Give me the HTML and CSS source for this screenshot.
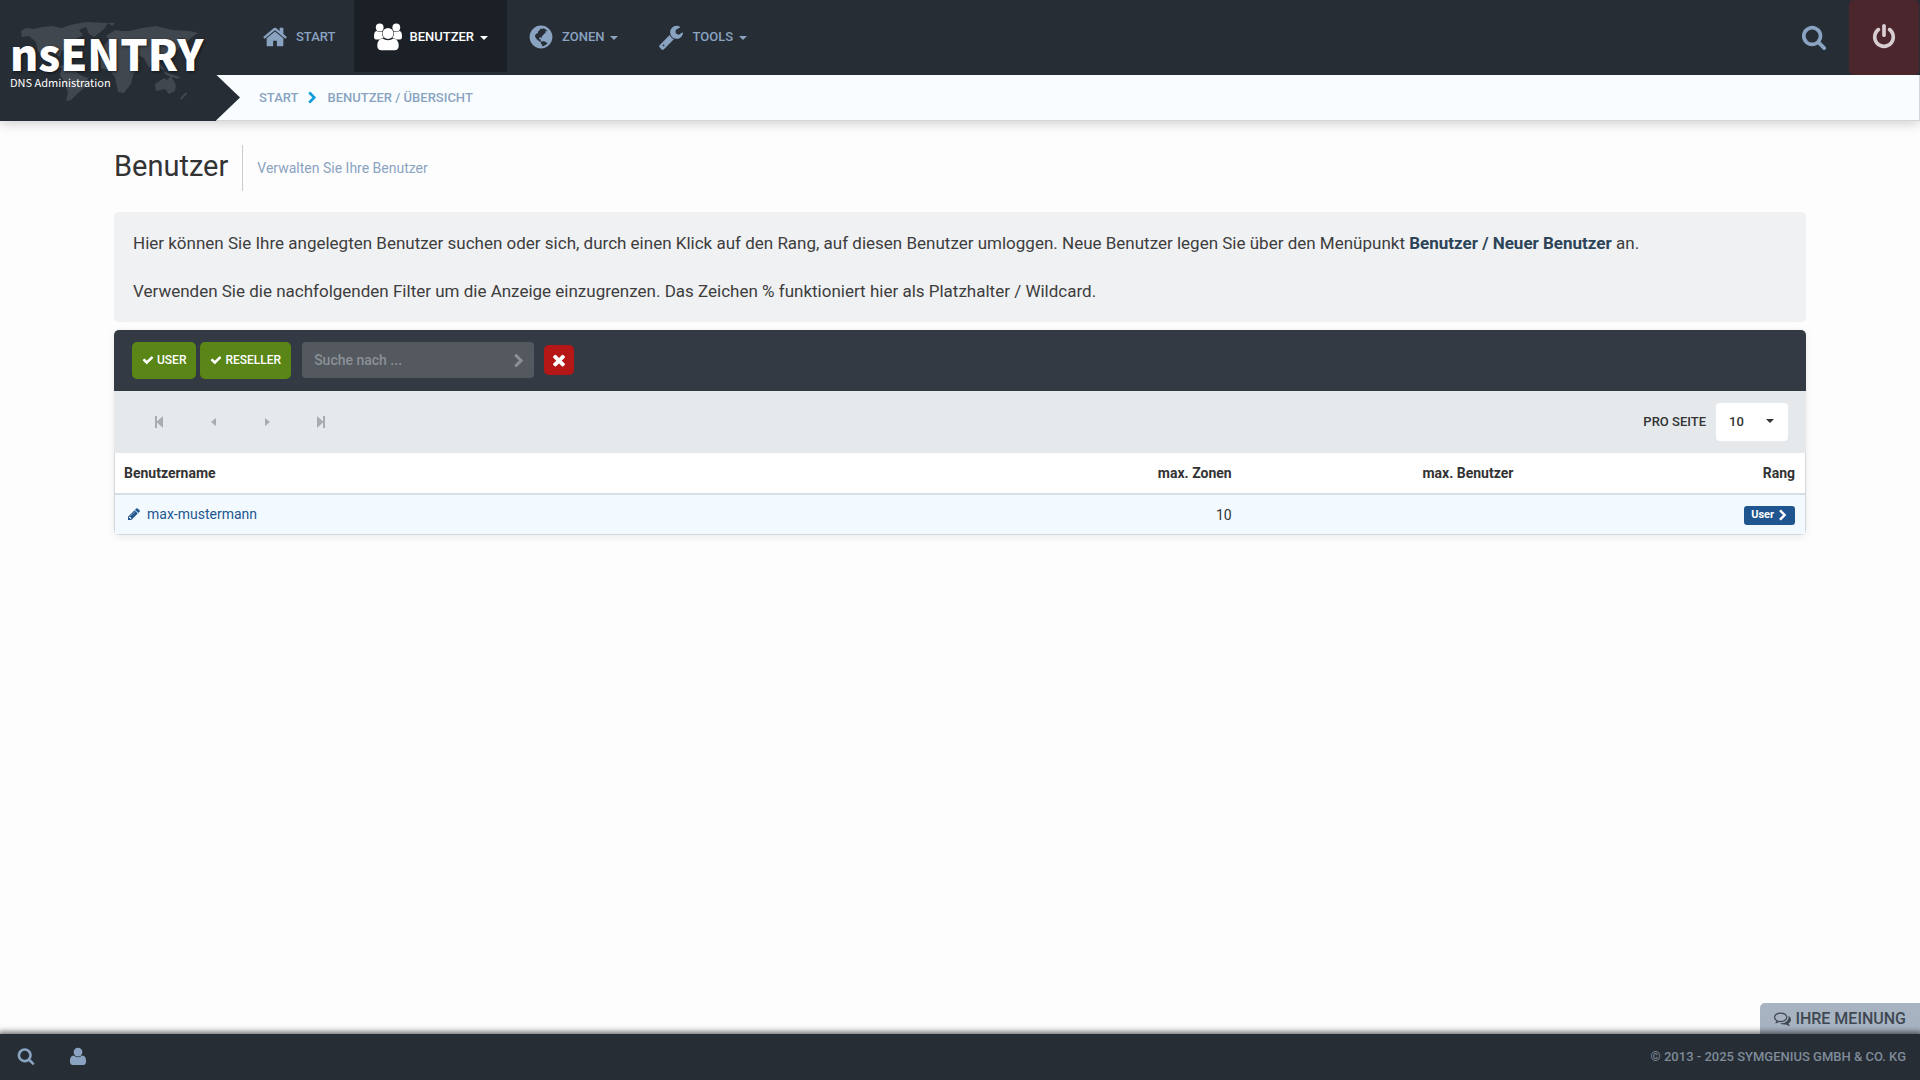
FILE: index.html
```html
<!DOCTYPE html>
<html lang="de">
<head>
<meta charset="utf-8">
<meta name="viewport" content="width=device-width, initial-scale=1">
<title>nsENTRY – Benutzer</title>
<link rel="stylesheet" href="styles.css">
</head>
<body>
<svg class="sprite" aria-hidden="true">
  <symbol id="home" viewBox="0 0 1792 1792"><path d="M1472 992v480q0 26-19 45t-45 19h-384v-384h-256v384h-384q-26 0-45-19t-19-45v-480q0-1 .5-3t.5-3l575-474 575 474q1 2 1 6zm223-69l-62 74q-8 9-21 11h-3q-13 0-21-7l-692-577-692 577q-12 8-24 7-13-2-21-11l-62-74q-8-10-7-23.5t11-21.5l719-599q32-26 76-26t76 26l244 204v-195q0-14 9-23t23-9h192q14 0 23 9t9 23v408l219 182q10 8 11 21.5t-7 23.5z"/></symbol>
  <symbol id="search" viewBox="0 0 1792 1792"><path d="M1216 832q0-185-131.5-316.5t-316.5-131.5-316.5 131.5-131.5 316.5 131.5 316.5 316.5 131.5 316.5-131.5 131.5-316.5zm512 832q0 52-38 90t-90 38q-54 0-90-38l-343-342q-179 124-399 124-143 0-273.5-55.5t-225-150-150-225-55.5-273.5 55.5-273.5 150-225 225-150 273.5-55.5 273.5 55.5 225 150 150 225 55.5 273.5q0 220-124 399l343 343q37 37 37 90z"/></symbol>
  <symbol id="power" viewBox="0 0 1792 1792"><path d="M1664 896q0 156-61 298t-164 245-245 164-298 61-298-61-245-164-164-245-61-298q0-182 80.5-343t226.5-270q43-32 95.5-25t83.5 50q32 42 24.5 94.5t-49.5 84.5q-98 74-151.5 181t-53.5 228q0 104 40.5 198.5t109.5 163.5 163.5 109.5 198.5 40.5 198.5-40.5 163.5-109.5 109.5-163.5 40.5-198.5q0-121-53.5-228t-151.5-181q-42-32-49.5-84.5t24.5-94.5q31-43 84-50t95 25q146 109 226.5 270t80.5 343zm-640-768v640q0 52-38 90t-90 38-90-38-38-90v-640q0-52 38-90t90-38 90 38 38 90z"/></symbol>
  <symbol id="pencil" viewBox="0 0 1792 1792"><path d="M491 1536l91-91-235-235-91 91v107h128v128h107zm523-928q0-22-22-22-10 0-17 7l-542 542q-7 7-7 17 0 22 22 22 10 0 17-7l542-542q7-7 7-17zm-54-192l416 416-832 832h-416v-416zm683 96q0 53-37 90l-166 166-416-416 166-165q36-38 90-38 53 0 91 38l235 234q37 39 37 91z"/></symbol>
  <symbol id="check" viewBox="0 0 1792 1792"><path d="M1671 566q0 40-28 68l-724 724-136 136q-28 28-68 28t-68-28l-136-136-362-362q-28-28-28-68t28-68l136-136q28-28 68-28t68 28l294 295 656-657q28-28 68-28t68 28l136 136q28 28 28 68z"/></symbol>
  <symbol id="times" viewBox="0 0 1792 1792"><path d="M1490 1322q0 40-28 68l-136 136q-28 28-68 28t-68-28l-294-294-294 294q-28 28-68 28t-68-28l-136-136q-28-28-28-68t28-68l294-294-294-294q-28-28-28-68t28-68l136-136q28-28 68-28t68 28l294 294 294-294q28-28 68-28t68 28l136 136q28 28 28 68t-28 68l-294 294 294 294q28 28 28 68z"/></symbol>
  <symbol id="chevron" viewBox="300 0 1200 1792"><path d="M1363 941l-742 742q-19 19-45 19t-45-19l-166-166q-19-19-19-45t19-45l531-531-531-531q-19-19-19-45t19-45l166-166q19-19 45-19t45 19l742 742q19 19 19 45t-19 45z"/></symbol>
  <symbol id="wrench" viewBox="0 0 1792 1792"><path d="M448 1472q0-26-19-45t-45-19-45 19-19 45 19 45 45 19 45-19 19-45zm644-420l-682 682q-37 37-90 37-52 0-91-37l-106-108q-38-36-38-90 0-53 38-91l681-681q39 98 114.5 173.5t173.5 114.5zm634-435q0 39-23 106-47 134-164.5 217.5t-258.5 83.5q-185 0-316.5-131.5t-131.5-316.5 131.5-316.5 316.5-131.5q58 0 121.5 16.5t107.5 46.5q16 11 16 28t-16 28l-293 169v224l193 107q5-3 79-48.5t135.5-81 70.5-35.5q15 0 23.5 10t8.5 25z"/></symbol>
  <symbol id="comments" viewBox="0 0 1792 1792"><path d="M704 384q-153 0-286 52t-211.5 141-78.5 191q0 82 53 158t149 132l97 56-35 84q34-20 62-39l44-31 53 10q78 14 153 14 153 0 286-52t211.5-141 78.5-191-78.5-191-211.5-141-286-52zm0-128q191 0 353.5 68.5t256.5 186.5 94 257-94 257-256.5 186.5-353.5 68.5q-86 0-176-16-124 88-278 128-36 9-86 16h-3q-11 0-20.5-8t-11.5-21q-1-3-1-6.5t.5-6.5 2-6l2.5-5 3.5-5.5 4-5 4.5-5 4-4.5q5-6 23-25t26-29.5 22.5-29 25-38.5 20.5-44q-124-72-195-177t-71-224q0-139 94-257t256.5-186.5 353.5-68.5zm822 1169q10 24 20.5 44t25 38.5 22.5 29 26 29.5 23 25q1 1 4 4.5t4.5 5 4 5 3.5 5.5l2.5 5 2 6 .5 6.5-1 6.5q-3 14-13 22t-22 7q-50-7-86-16-154-40-278-128-90 16-176 16-271 0-472-132 58 4 88 4 161 0 309-45t264-129q125-92 192-212t67-254q0-77-23-152 129 71 204 178t75 230q0 120-71 224.5t-195 176.5z"/></symbol>
  <symbol id="user" viewBox="0 0 16 16"><circle cx="8" cy="4.500" r="3.900"/><path d="M4.200 7.600Q6 9.200 8 9.200T11.800 7.600Q15.200 8 15.200 12.500 15.200 16 12.500 16H3.500Q.8 16 .8 12.500.8 8 4.200 7.600Z"/></symbol>
  <symbol id="users" viewBox="0 0 28 28"><circle cx="5.700" cy="4.500" r="3.900"/><circle cx="22.300" cy="4.500" r="3.900"/><path d="M2.500 8Q5.700 9.700 8.200 8.500 7.300 12.200 9.600 14.900 7 15 5.700 16.600H3Q0 16.600 0 13.400 0 8.500 2.500 8ZM25.500 8Q22.300 9.700 19.800 8.500 20.700 12.200 18.400 14.900 21 15 22.300 16.600H25Q28 16.600 28 13.400 28 8.500 25.500 8Z"/><circle cx="14" cy="10.400" r="5.500"/><path d="M8.500 15.500Q11 17.300 14 17.300T19.500 15.500Q24.700 16.300 24.700 22.600 24.700 27.300 20.500 27.300H7.500Q3.300 27.300 3.300 22.600 3.300 16.300 8.500 15.500Z"/></symbol>
  <symbol id="globe" viewBox="0 0 24 24"><path fill-rule="evenodd" d="M12 .6A11.400 11.400 0 1 0 12 23.400 11.400 11.400 0 1 0 12 .6ZM11.500 3.400 13.200 4 14.600 3.200 16 4 18 5.400 17.400 6.600 15.900 6.400 16.700 8 15.200 8.800 14 10.300 12.600 11.500 12.900 12.900 11.500 12.300 10 12.900 10.200 14.300 11.600 14.300 11.700 15.900 13 16.700 14.800 16 17 17.300 18.600 18 17 19.800 14.500 21 13.200 21.200 13 19.600 11.700 18.400 12.100 17.200 9.900 16 8 14.600 6.500 12.400 5.900 10.400 7.200 8.800 8.800 8.200 9.200 6.200 10.600 5.200Z"/></symbol>
  <symbol id="first" viewBox="0 0 8 12"><path d="M0 0H2V5.500L8 0V12L2 6.500V12H0Z"/></symbol>
  <symbol id="last" viewBox="0 0 8 12"><path d="M8 0H6V5.500L0 0V12L6 6.500V12H8Z"/></symbol>
  <symbol id="prev" viewBox="0 0 5 8"><path d="M5 0V8L0 4Z"/></symbol>
  <symbol id="next" viewBox="0 0 5 8"><path d="M0 0V8L5 4Z"/></symbol>
  <symbol id="worldmap" viewBox="0 0 190 90"><path d="M3 9 8 6 16 7 24 5 34 4 44 6 52 3 62 1 70 0 90 1 86 7 76 15 71 12 68 5 61 8 65 13 60 16 53 19 49 25 43 30 42 35 36 31 29 34 31 39 38 39 42 44 45 43 55 47 62 53 70 56 66 66 59 72 53 78 48 79 50 71 47 61 42 53 44 46 36 43 26 38 20 29 18 20 11 14 4 15Z"/><path d="M86 24 91 17 88 14 97 8 104 9 111 9 124 6 138 4 154 8 172 9 180 11 174 15 168 20 165 16 159 17 163 24 157 30 154 36 148 42 146 37 141 40 147 48 143 47 136 37 131 46 126 36 118 32 122 39 116 43 121 45 115 53 113 62 106 71 100 70 97 55 92 49 83 46 82 37 87 30Z"/><path d="M137 62 146 56 149 58 153 54 158 63 157 69 151 72 147 67 138 69ZM145 49 153 52 162 55 160 57 148 53ZM162 76 168 70 169 72 163 78ZM90 1 97 1 94 4Z"/></symbol>
</svg>

<header class="header">
  <a class="logo" href="#" aria-label="nsENTRY DNS Administration">
    <svg class="logo-map" aria-hidden="true"><use href="#worldmap"/></svg>
    <span class="logo-name">nsENTRY</span>
    <span class="logo-sub">DNS Administration</span>
  </a>
  <div class="topbar">
    <nav class="nav">
      <a class="nav-item" href="#"><span class="nav-icon"><svg class="icon-lg"><use href="#home"/></svg></span>START</a>
      <button class="nav-item is-active" type="button"><span class="nav-icon"><svg class="icon-xl"><use href="#users"/></svg></span>BENUTZER<span class="caret"></span></button>
      <button class="nav-item" type="button"><span class="nav-icon"><svg class="icon-md"><use href="#globe"/></svg></span>ZONEN<span class="caret"></span></button>
      <button class="nav-item" type="button"><span class="nav-icon"><svg class="icon-lg"><use href="#wrench"/></svg></span>TOOLS<span class="caret"></span></button>
    </nav>
    <button class="top-search" type="button" aria-label="Suche"><svg class="icon-lg"><use href="#search"/></svg></button>
    <a class="logout" href="#" aria-label="Abmelden"><svg class="icon-lg"><use href="#power"/></svg></a>
  </div>
  <nav class="breadcrumb" aria-label="Pfad">
    <a href="#">START</a>
    <svg class="crumb-sep"><use href="#chevron"/></svg>
    <a href="#">BENUTZER / ÜBERSICHT</a>
  </nav>
</header>

<main class="content">
  <div class="page-head">
    <h1>Benutzer</h1>
    <p class="page-sub">Verwalten Sie Ihre Benutzer</p>
  </div>

  <section class="info">
    <p>Hier können Sie Ihre angelegten Benutzer suchen oder sich, durch einen Klick auf den Rang, auf diesen Benutzer umloggen. Neue Benutzer legen Sie über den Menüpunkt <strong>Benutzer / Neuer Benutzer</strong> an.</p>
    <p>Verwenden Sie die nachfolgenden Filter um die Anzeige einzugrenzen. Das Zeichen % funktioniert hier als Platzhalter / Wildcard.</p>
  </section>

  <section class="panel">
    <form class="filters">
      <button class="toggle" type="button"><svg class="icon-xs"><use href="#check"/></svg>USER</button>
      <button class="toggle" type="button"><svg class="icon-xs"><use href="#check"/></svg>RESELLER</button>
      <div class="search-box">
        <input type="text" placeholder="Suche nach ..." aria-label="Suche nach">
        <button type="button" aria-label="Suchen"><svg class="search-go"><use href="#chevron"/></svg></button>
      </div>
      <button class="clear" type="button" aria-label="Filter löschen"><svg class="icon-sm"><use href="#times"/></svg></button>
    </form>
    <div class="pager">
      <div class="pager-nav">
        <button type="button" aria-label="Erste Seite"><svg class="pg-end"><use href="#first"/></svg></button>
        <button type="button" aria-label="Vorherige Seite"><svg class="pg-step"><use href="#prev"/></svg></button>
        <button type="button" aria-label="Nächste Seite"><svg class="pg-step"><use href="#next"/></svg></button>
        <button type="button" aria-label="Letzte Seite"><svg class="pg-end"><use href="#last"/></svg></button>
      </div>
      <label for="per-page">PRO SEITE</label>
      <div class="select-wrap">
        <select id="per-page"><option>10</option><option>25</option><option>50</option></select>
      </div>
    </div>
    <table class="users">
      <thead>
        <tr><th class="col-name">Benutzername</th><th>max. Zonen</th><th>max. Benutzer</th><th>Rang</th></tr>
      </thead>
      <tbody>
        <tr>
          <td class="col-name"><a class="user-link" href="#"><svg class="icon-sm"><use href="#pencil"/></svg>max-mustermann</a></td>
          <td>10</td>
          <td></td>
          <td><a class="rank" href="#">User<svg class="rank-go"><use href="#chevron"/></svg></a></td>
        </tr>
      </tbody>
    </table>
  </section>
</main>

<button class="feedback" type="button"><svg class="icon-fb"><use href="#comments"/></svg>IHRE MEINUNG</button>
<footer class="footer">
  <button type="button" aria-label="Suche"><svg class="icon-ft"><use href="#search"/></svg></button>
  <a href="#" aria-label="Profil"><svg class="icon-ft"><use href="#user"/></svg></a>
  <p class="copyright">© 2013 - 2025 SYMGENIUS GMBH &amp; CO. KG</p>
</footer>
</body>
</html>
```
FILE: styles.css
```css
*, *::before, *::after { box-sizing: border-box; }

body {
  margin: 0;
  min-height: 100vh;
  display: flex;
  flex-direction: column;
  background: #fdfdfe;
  color: #333;
  font: 14px/20px Roboto, "Liberation Sans", sans-serif;
}

h1, p { margin: 0; }
a { text-decoration: none; color: inherit; }
button {
  margin: 0;
  padding: 0;
  border: 0;
  background: none;
  color: inherit;
  font: inherit;
  cursor: pointer;
}
svg { display: block; flex: none; fill: currentColor; }
.sprite { position: absolute; width: 0; height: 0; }

.icon-xs { width: 12px; height: 12px; }
.icon-sm { width: 14px; height: 14px; }
.icon-md { width: 24px; height: 24px; }
.icon-lg { width: 26px; height: 26px; }
.icon-xl { width: 28px; height: 28px; }
.icon-fb { width: 17px; height: 17px; }
.icon-ft { width: 18px; height: 18px; }

/* Header */
.header {
  display: grid;
  grid-template-columns: 216px 1fr;
  grid-template-rows: 75px 46px;
  box-shadow: 0 2px 12px rgba(0, 0, 0, .2);
}
.logo {
  grid-row: 1 / 3;
  position: relative;
  display: flex;
  flex-direction: column;
  padding: 28px 0 0 10px;
  background: #262d35;
  color: #fff;
  font-family: "Noto Sans CJK JP", "Open Sans", sans-serif;
}
.logo-map {
  position: absolute;
  left: 18px;
  top: 22px;
  width: 190px;
  height: 90px;
  fill: #41474e;
}
.logo-name {
  position: relative;
  font-size: 43px;
  line-height: 48px;
  font-weight: 900;
  text-shadow: 1px 1px 3px rgba(0, 0, 0, .6);
}
.logo-sub {
  position: relative;
  font-size: 11px;
  line-height: 12px;
}

.topbar {
  display: flex;
  align-items: stretch;
  background: #262d35;
  color: #8aa3c1;
}
.nav { display: flex; flex: 1; padding-left: 25px; }
.nav-item {
  display: flex;
  align-items: center;
  height: 72px;
  padding: 2px 19px 0 20px;
  font-size: 13px;
  font-weight: 500;
}
.nav-item.is-active { background: #1b1f26; color: #fff; }
.nav-icon {
  display: flex;
  justify-content: center;
  width: 28px;
  margin-right: 7px;
}
.caret {
  margin: 2px 0 0 6px;
  border: 4px solid transparent;
  border-top-color: currentColor;
  border-bottom: 0;
}
.top-search { padding: 0 22px 2px; }
.logout {
  display: flex;
  align-items: center;
  justify-content: center;
  width: 70px;
  margin-right: 1px;
  padding-bottom: 2px;
  border-radius: 5px;
  background: #4b272d;
  color: #d8cdd0;
}
.breadcrumb {
  display: flex;
  align-items: center;
  border: solid #d3d7db;
  border-width: 0 1px 1px 0;
  background: #f9fdff;
  color: #8aa3c1;
  font-size: 13px;
  font-weight: 500;
}
.breadcrumb::before {
  content: "";
  width: 24px;
  height: 46px;
  margin-right: 19px;
  background: #262d35;
  clip-path: polygon(0 0, 100% 50%, 0 100%);
}
.crumb-sep { width: 9px; height: 13px; margin: 0 10px; color: #109bdc; }

/* Page */
.content { flex: 1; padding: 24px 114px; }
.page-head { display: flex; align-items: center; margin-bottom: 21px; }
.page-head h1 {
  padding: 0 14px 4px 0;
  border-right: 1px solid #c9ccd0;
  font-size: 29px;
  line-height: 42px;
  font-weight: 400;
}
.page-sub { padding-left: 14px; color: #8aa3c1; }

.info {
  display: grid;
  gap: 24px;
  padding: 19px;
  border-radius: 5px;
  background: #f0f1f3;
  color: #3d3d3d;
  font-size: 17px;
  line-height: 24px;
}
.info strong { color: #2c4458; }

.panel {
  margin-top: 8px;
  border-radius: 5px;
  box-shadow: 0 2px 8px rgba(0, 0, 0, .08);
}
.filters {
  display: flex;
  align-items: center;
  height: 61px;
  padding: 0 18px 1px;
  border-radius: 5px 5px 0 0;
  background: #343a43;
}
.toggle {
  display: flex;
  align-items: center;
  gap: 3px;
  height: 37px;
  margin-right: 4px;
  padding: 0 10px;
  border-radius: 5px;
  background: #598617;
  color: #fff;
  font-size: 12px;
  font-weight: 500;
}
.search-box {
  display: flex;
  align-items: center;
  width: 232px;
  height: 36px;
  margin: 0 10px 0 7px;
  padding: 0 10px 0 12px;
  border-radius: 4px;
  background: #53595f;
  color: #8b9096;
}
.search-box input {
  flex: 1;
  min-width: 0;
  padding: 0;
  border: 0;
  outline: 0;
  background: none;
  color: #fff;
  font: inherit;
  font-weight: 500;
}
.search-box input::placeholder { color: #8b9096; opacity: 1; }
.search-go { width: 10px; height: 15px; }
.clear {
  display: grid;
  place-items: center;
  width: 30px;
  height: 30px;
  border-radius: 5px;
  background: #b51717;
  color: #fff;
}
.clear .icon-sm { width: 18px; height: 18px; }

.pager {
  display: flex;
  align-items: center;
  height: 62px;
  padding: 0 18px;
  background: #e5e9ec;
}
.pager-nav { display: flex; flex: 1; color: #a9acaf; }
.pager-nav button {
  display: grid;
  place-items: center;
  width: 54px;
  height: 36px;
}
.pg-end { width: 8px; height: 12px; }
.pg-step { width: 5px; height: 8px; }
.pager label { margin-right: 10px; font-size: 13px; font-weight: 500; }
.select-wrap {
  position: relative;
  width: 72px;
  height: 38px;
}
.select-wrap select {
  width: 100%;
  height: 100%;
  padding: 0 13px;
  border: 0;
  border-radius: 4px;
  appearance: none;
  background: #fff;
  color: #333;
  font: inherit;
  font-size: 13px;
  font-weight: 500;
}
.select-wrap::after {
  content: "";
  position: absolute;
  right: 14px;
  top: 16px;
  border: 4px solid transparent;
  border-top-color: #333;
  border-bottom: 0;
  pointer-events: none;
}

.users {
  width: 100%;
  table-layout: fixed;
  border: 1px solid #d4d7db;
  border-top: 0;
  border-radius: 0 0 5px 5px;
  border-spacing: 0;
  background: #fff;
}
.users th, .users td {
  width: 16.667%;
  height: 39px;
  padding: 0 10px;
  text-align: right;
}
.users th { height: 42px; border-bottom: 2px solid #d7dfe6; font-weight: 700; }
.users td { background: #f2f9ff; }
.users .col-name { width: auto; padding-left: 9px; text-align: left; }
.user-link { display: inline-flex; align-items: center; gap: 6px; padding-left: 3px; color: #22568f; }
.rank {
  display: inline-flex;
  align-items: center;
  gap: 5px;
  height: 19px;
  padding: 0 8px 1px 7px;
  border-radius: 3px;
  background: #20568f;
  color: #fff;
  font-size: 11px;
  font-weight: 700;
  vertical-align: middle;
}
.rank-go { width: 8px; height: 12px; }

/* Bottom */
.feedback {
  align-self: flex-end;
  display: flex;
  align-items: center;
  gap: 4px;
  height: 31px;
  padding: 0 14px;
  border-radius: 5px 0 0 0;
  background: #a7b3c1;
  color: #3f4852;
  font-size: 16px;
  font-weight: 500;
}
.footer {
  display: flex;
  align-items: center;
  gap: 34px;
  height: 46px;
  padding: 0 14px 2px 17px;
  background: #262d35;
  box-shadow: 0 0 6px 2px rgba(0, 0, 0, .6);
  color: #8aa3c1;
}
.copyright {
  flex: 1;
  padding-top: 2px;
  text-align: right;
  color: #7f8b98;
  font-size: 13px;
  font-weight: 500;
}
```
